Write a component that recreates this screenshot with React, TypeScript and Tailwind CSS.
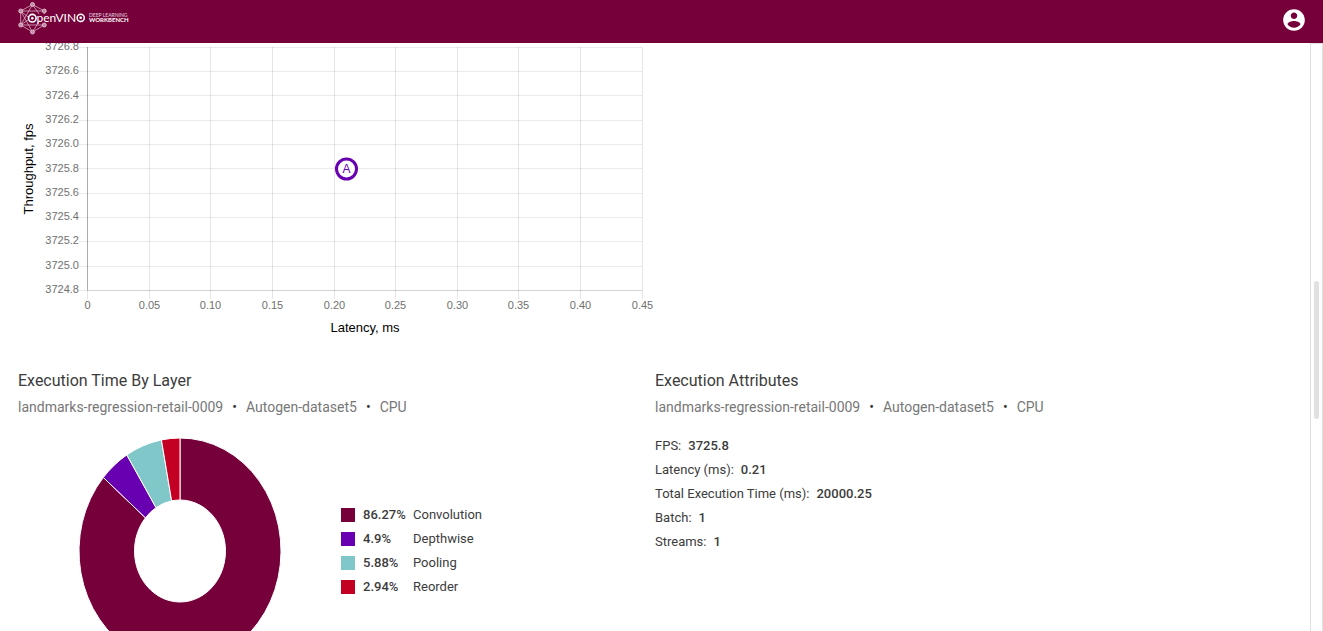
import React from 'react';

const X_TICKS = [
  { x: 69, label: '0' },
  { x: 131, label: '0.05' },
  { x: 192, label: '0.10' },
  { x: 254, label: '0.15' },
  { x: 316, label: '0.20' },
  { x: 377, label: '0.25' },
  { x: 439, label: '0.30' },
  { x: 500, label: '0.35' },
  { x: 562, label: '0.40' },
  { x: 624, label: '0.45' },
];

const Y_TICKS = [
  { y: 4, label: '3726.8' },
  { y: 28, label: '3726.6' },
  { y: 52, label: '3726.4' },
  { y: 77, label: '3726.2' },
  { y: 101, label: '3726.0' },
  { y: 125, label: '3725.8' },
  { y: 150, label: '3725.6' },
  { y: 174, label: '3725.4' },
  { y: 198, label: '3725.2' },
  { y: 223, label: '3725.0' },
  { y: 247, label: '3724.8' },
];

const LAYERS = [
  { name: 'Convolution', percent: 86.27, fill: 'fill-[#76003a]', swatch: 'bg-[#76003a]' },
  { name: 'Depthwise', percent: 4.9, fill: 'fill-[#6800b2]', swatch: 'bg-[#6800b2]' },
  { name: 'Pooling', percent: 5.88, fill: 'fill-[#7fc7c9]', swatch: 'bg-[#7fc7c9]' },
  { name: 'Reorder', percent: 2.94, fill: 'fill-[#c30023]', swatch: 'bg-[#c30023]' },
];

const ATTRIBUTES = [
  ['FPS:', '3725.8'],
  ['Latency (ms):', '0.21'],
  ['Total Execution Time (ms):', '20000.25'],
  ['Batch:', '1'],
  ['Streams:', '1'],
];

const NODES = [
  [14.5, 4.5],
  [2.7, 11],
  [26.3, 11],
  [2.7, 25],
  [26.3, 25],
  [14.5, 32],
];

function Logo() {
  return (
    <svg viewBox="0 0 112 36" role="img" aria-label="OpenVINO Deep Learning Workbench" className="h-9 w-28 font-[Lato,sans-serif]">
      <g className="fill-none stroke-[#d9aec3]" strokeWidth="0.8">
        <path d="M14.500 4.500 2.700 11V25L14.500 32 26.300 25M14.500 4.500 26.300 11V14" />
        <path d="M2.700 11H26.300M2.700 25H26.300M2.700 11 14.500 32 22 20M2.700 25 14.500 4.500 21 14M2.700 11 10 17M2.700 25 10 20" />
      </g>
      {NODES.map(([cx, cy]) => (
        <circle key={`${cx}-${cy}`} cx={cx} cy={cy} r="2" className="fill-[#c48aa6] stroke-[#e6cbd8]" strokeWidth="0.8" />
      ))}
      <circle cx="14.3" cy="18.200" r="3.800" className="fill-[#76003a] stroke-white" strokeWidth="1.600" />
      <circle cx="14.3" cy="18.200" r="1.300" className="fill-white" />
      <text x="18.500" y="22" fontSize="12" className="fill-white">penVIN</text>
      <circle cx="62.700" cy="17.800" r="3.600" className="fill-[#76003a] stroke-white" strokeWidth="1.500" />
      <circle cx="62.700" cy="17.800" r="1.300" className="fill-white" />
      <text x="71" y="17" fontSize="5" className="fill-white/80">DEEP LEARNING</text>
      <text x="71" y="22" fontSize="6" className="fill-white font-bold">WORKBENCH</text>
    </svg>
  );
}

function ThroughputChart() {
  return (
    <svg viewBox="0 0 637 300" role="img" aria-label="Throughput by latency" className="block w-full font-['Liberation_Sans',Arial,sans-serif]">
      <g shapeRendering="crispEdges">
        {Y_TICKS.map(({ y, label }) => (
          <path key={label} d={`M61 ${y + 0.5}H624`} className="stroke-black/8" />
        ))}
        {X_TICKS.map(({ x, label }) => (
          <path key={label} d={`M${x + 0.5} 4V256`} className="stroke-black/10" />
        ))}
        <path d="M69.5 4V247" className="stroke-black/25" />
        <path d="M69 247.5H624" className="stroke-black/10" />
      </g>
      <g fontSize="11" className="fill-[#707070]">
        {Y_TICKS.map(({ label }, index) => (
          <text key={label} x="61" y={Math.round(7 + 24.3 * index)} textAnchor="end">{label}</text>
        ))}
        {X_TICKS.map(({ x, label }) => (
          <text key={label} x={x + 0.5} y="266" textAnchor="middle">{label}</text>
        ))}
      </g>
      <g fontSize="13" className="fill-black" textAnchor="middle">
        <text x="347" y="289">Latency, ms</text>
        <text transform="translate(15 126) rotate(-90)">Throughput, fps</text>
      </g>
      <circle cx="328.5" cy="126" r="10" className="fill-white stroke-[#6800b2]" strokeWidth="3" />
      <text x="328.5" y="130" fontSize="12" textAnchor="middle" className="fill-[#6800b2]">A</text>
    </svg>
  );
}

function arc(start: number, end: number) {
  const at = (t: number, rx: number, ry: number) =>
    `${(101 + rx * Math.sin(t * 2 * Math.PI)).toFixed(2)} ${(113 - ry * Math.cos(t * 2 * Math.PI)).toFixed(2)}`;
  const large = end - start > 0.5 ? 1 : 0;
  return `M${at(start, 101, 113)}A101 113 0 ${large} 1 ${at(end, 101, 113)}L${at(end, 45.5, 51)}A45.5 51 0 ${large} 0 ${at(start, 45.5, 51)}Z`;
}

function Donut() {
  const total = LAYERS.reduce((sum, layer) => sum + layer.percent, 0);
  let cursor = 0;
  return (
    <svg viewBox="0 0 202 226" role="img" aria-label="Execution time by layer" className="h-[226px] w-[202px] shrink-0">
      {LAYERS.map((layer) => {
        const start = cursor;
        cursor += layer.percent / total;
        return <path key={layer.name} d={arc(start, cursor)} className={`${layer.fill} stroke-white`} strokeWidth="1" />;
      })}
    </svg>
  );
}

function Heading({ title }: { title: string }) {
  return (
    <>
      <h2 className="text-base leading-6">{title}</h2>
      <p className="mt-1 flex flex-wrap gap-[9px] text-sm leading-5 text-[#777]">
        <span>landmarks-regression-retail-0009</span>
        <span className="text-[#3c3c3c]">•</span>
        <span>Autogen-dataset5</span>
        <span className="text-[#3c3c3c]">•</span>
        <span>CPU</span>
      </p>
    </>
  );
}

export default function App() {
  return (
    <div className="flex h-screen flex-col overflow-hidden bg-white font-[Roboto,sans-serif] text-[#3c3c3c]">
      <header className="flex h-[43px] shrink-0 items-start justify-between bg-[#76003a] pr-4 pl-[18px]">
        <a href="#home">
          <Logo />
        </a>
        <button type="button" aria-label="Account" className="mt-[7px] size-[26px]">
          <svg viewBox="0 0 24 24" className="size-full fill-white">
            <path d="M12 2C6.48 2 2 6.48 2 12s4.48 10 10 10 10-4.48 10-10S17.52 2 12 2zm0 3c1.66 0 3 1.34 3 3s-1.34 3-3 3-3-1.34-3-3 1.34-3 3-3zm0 14.200c-2.500 0-4.710-1.280-6-3.220.030-1.990 4-3.080 6-3.080 1.990 0 5.970 1.090 6 3.080-1.290 1.940-3.500 3.220-6 3.220z" />
          </svg>
        </button>
      </header>
      <div className="flex min-h-0 flex-1">
        <main className="min-w-0 flex-1 overflow-hidden px-[18px]">
          <div className="grid grid-cols-2">
            <ThroughputChart />
          </div>
          <div className="mt-[26px] grid grid-cols-2">
            <section>
              <Heading title="Execution Time By Layer" />
              <div className="mt-[21px] flex items-center gap-[60px] pl-[61px]">
                <Donut />
                <ul className="text-[13px] leading-6">
                  {LAYERS.map((layer) => (
                    <li key={layer.name} className="flex items-center">
                      <span className={`mr-2 size-[14px] ${layer.swatch}`} />
                      <span className="w-[50px] font-medium">{layer.percent}%</span>
                      <span>{layer.name}</span>
                    </li>
                  ))}
                </ul>
              </div>
            </section>
            <section>
              <Heading title="Execution Attributes" />
              <dl className="mt-[17px] text-[13px] leading-6">
                {ATTRIBUTES.map(([name, value]) => (
                  <div key={name} className="flex gap-[7px]">
                    <dt>{name}</dt>
                    <dd className="font-medium">{value}</dd>
                  </div>
                ))}
              </dl>
            </section>
          </div>
        </main>
        <div aria-hidden="true" className="flex w-[13px] shrink-0 flex-col items-center border border-b-0 border-[#e1e1e1]">
          <div className="h-[40.400%] shrink-0" />
          <div className="h-[23.500%] w-[5px] rounded-full bg-[#e1e1e1]" />
        </div>
      </div>
    </div>
  );
}
